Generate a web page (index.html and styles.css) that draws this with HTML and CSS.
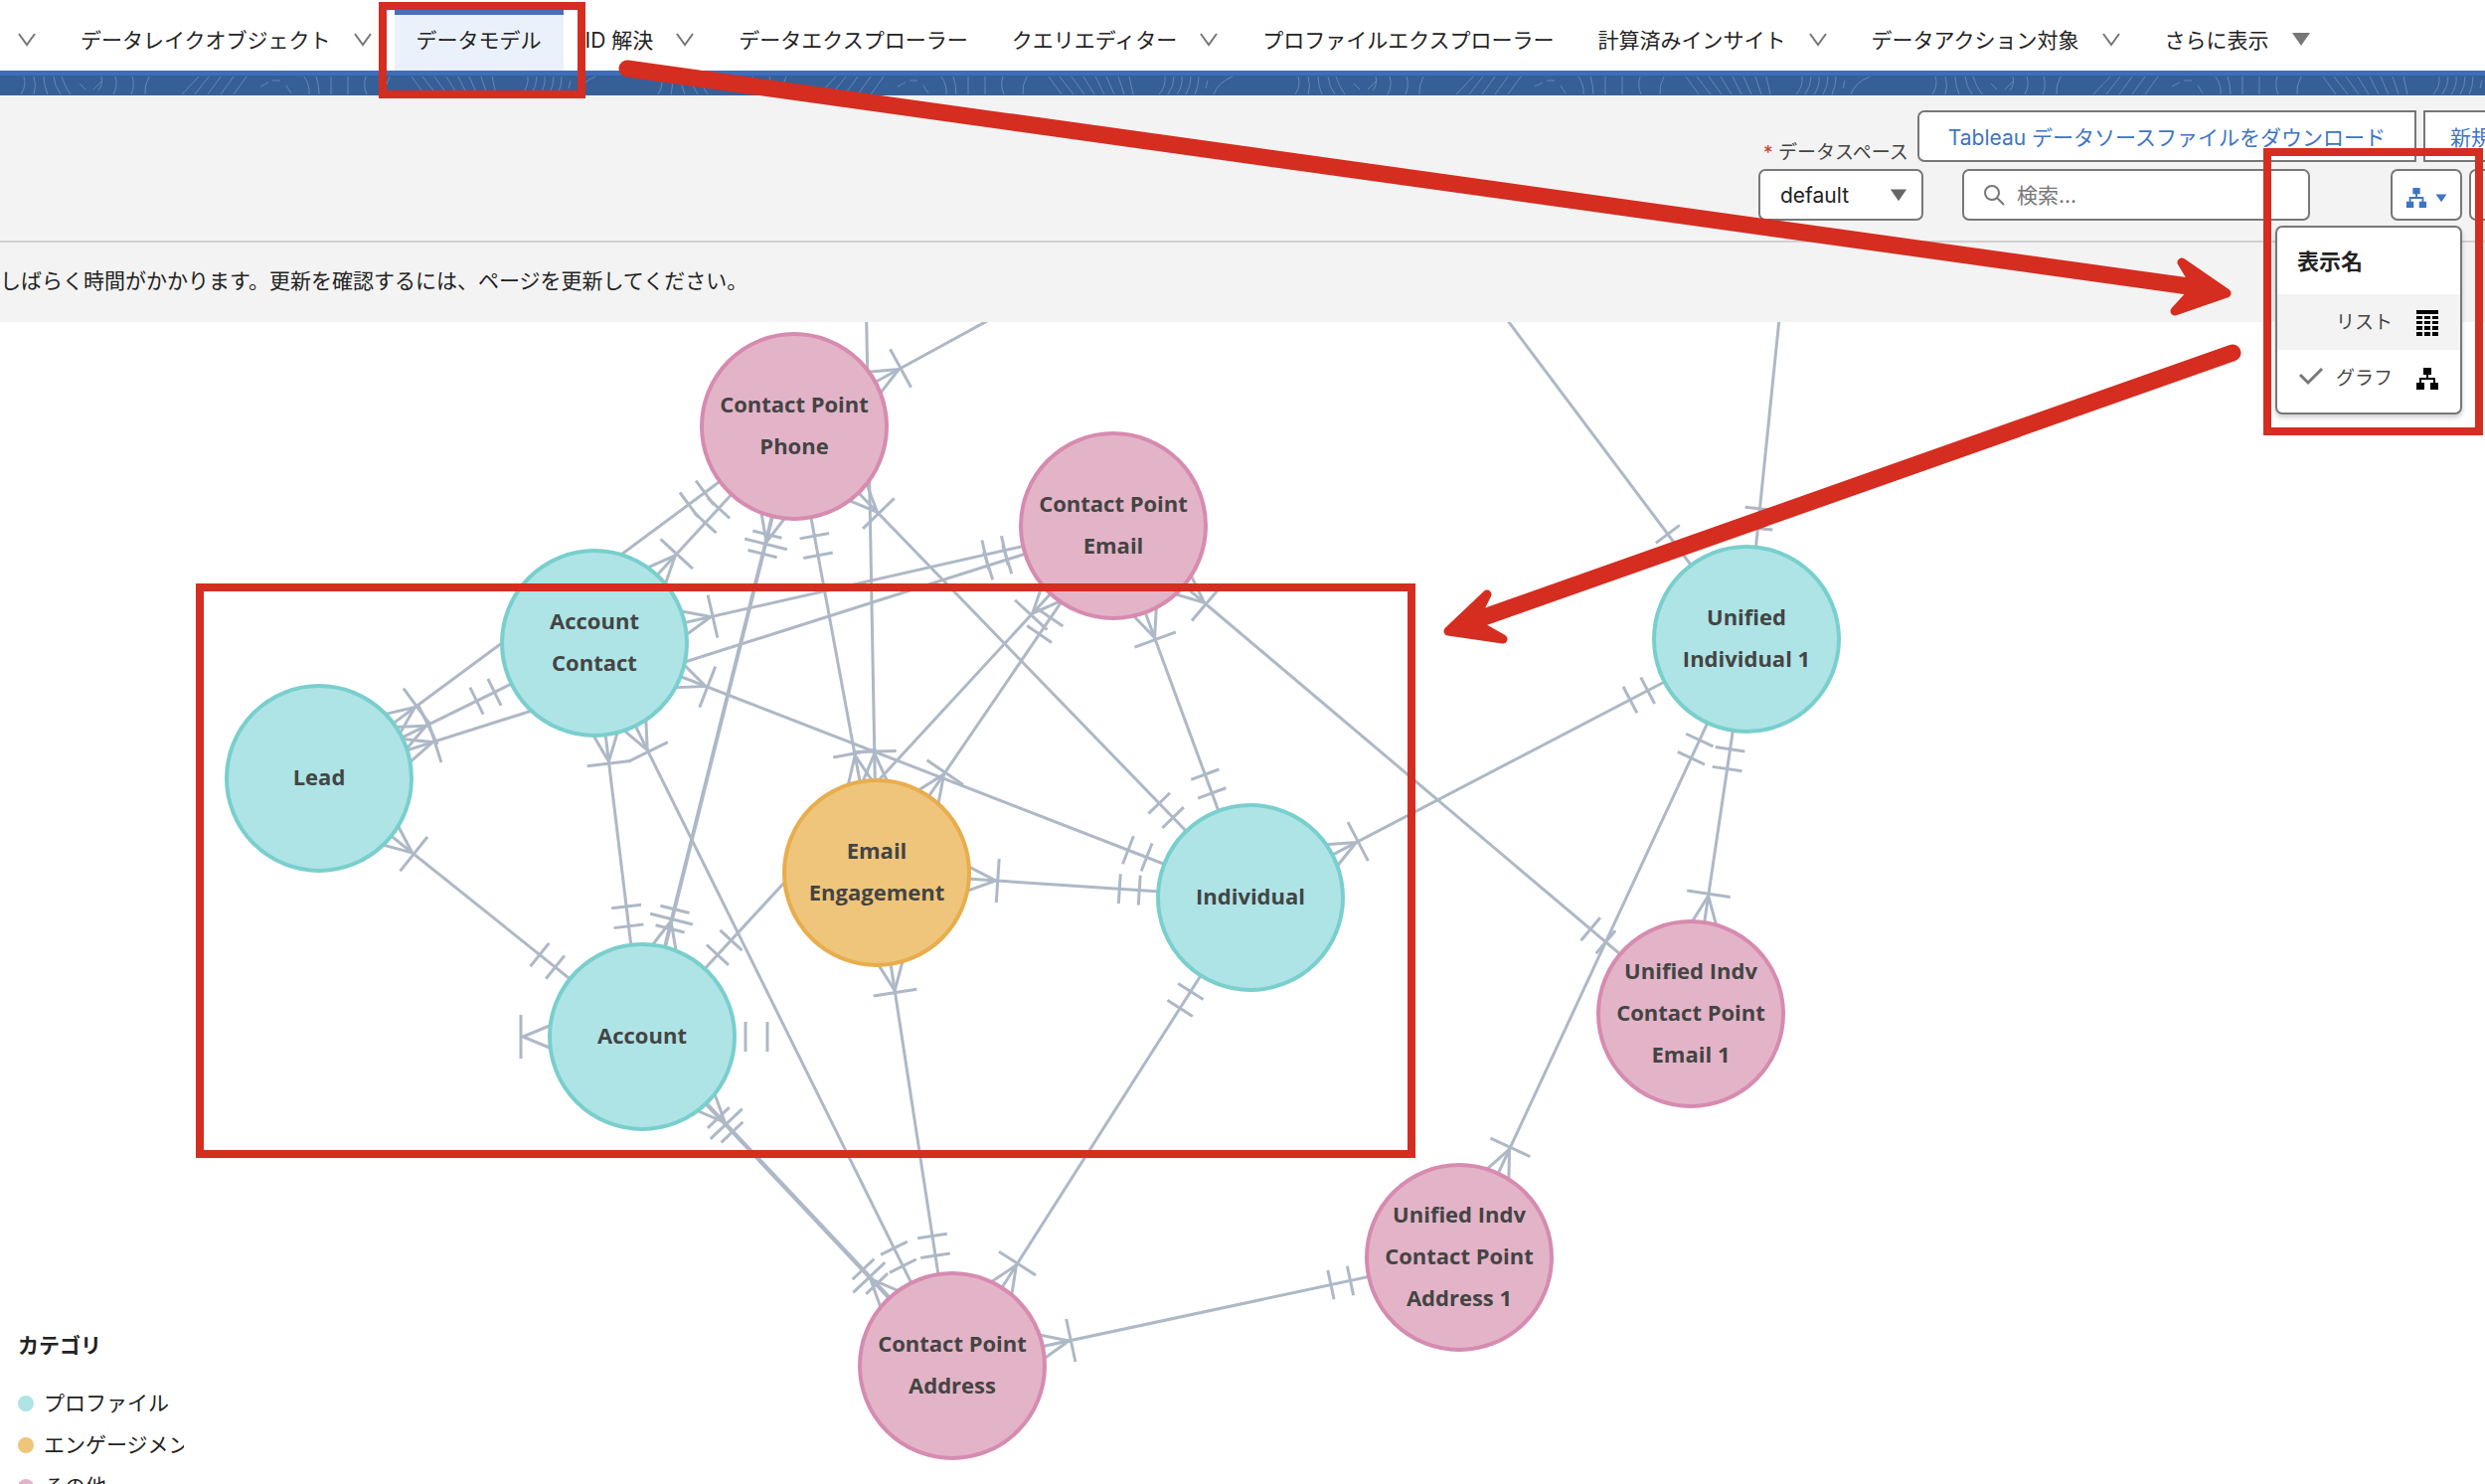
FILE: index.html
```
<!DOCTYPE html>
<html lang="ja">
  <head>
    <meta charset="utf-8" />
    <title>データモデル</title>
    <link rel="stylesheet" href="styles.css">
  </head>
  <body>
    <svg class="defs" aria-hidden="true">
      <symbol id="chevron" viewBox="0 0 20 20">
        <path d="M2 5l8 11 8-11" fill="none" stroke="currentColor" stroke-width="2" />
      </symbol>
      <symbol id="caret" viewBox="0 0 20 20">
        <path d="M1 4h18l-9 13z" fill="currentColor" />
      </symbol>
      <symbol id="tree" viewBox="0 0 24 24">
        <path d="M8 1h8v7h-8zM1 16h8v7H1zM15 16h8v7h-8z" fill="currentColor" />
        <path d="M12 7v5M5 17v-5h14v5" fill="none" stroke="currentColor" stroke-width="2" />
      </symbol>
      <symbol id="table" viewBox="0 0 24 28">
        <path
          d="M1 1h22v4H1zM1 7h6v3H1zM9 7h6v3H9zM17 7h6v3h-6zM1 12h6v3H1zM9 12h6v3H9zM17 12h6v3h-6zM1 17h6v4H1zM9 17h6v4H9zM17 17h6v4h-6zM1 23h6v4H1zM9 23h6v4H9zM17 23h6v4h-6z"
          fill="currentColor" />
      </symbol>
    </svg>

    <nav class="tabs">
      <button class="tab" aria-label="メニュー"><svg><use href="#chevron" /></svg></button>
      <button class="tab">データレイクオブジェクト<svg><use href="#chevron" /></svg></button>
      <a class="tab active" href="#model">データモデル</a>
      <button class="tab">ID 解決<svg><use href="#chevron" /></svg></button>
      <a class="tab" href="#explorer">データエクスプローラー</a>
      <button class="tab">クエリエディター<svg><use href="#chevron" /></svg></button>
      <a class="tab" href="#profile">プロファイルエクスプローラー</a>
      <button class="tab">計算済みインサイト<svg><use href="#chevron" /></svg></button>
      <button class="tab">データアクション対象<svg><use href="#chevron" /></svg></button>
      <button class="tab">さらに表示<svg><use href="#caret" /></svg></button>
    </nav>

    <svg class="banner" aria-hidden="true">
      <pattern id="waves" width="641" height="20" patternUnits="userSpaceOnUse">
        <path
          d="M24 1q3 9-3 18M34 1q3 9 0 18M44 1q0 9 4 18M54 1q1 10 7 18M62 1q3 10 9 18M80 8l6 6M94 14l8-8M102 1q2 8-3 14M116 1q3 9-2 18M133 1q3 9-1 18M150 1q-5 9-4 18M183 19l17-18M196 19l14-18M209 19l13-18M222 19l13-18M235 19l13-18M262 11l8-4M274 5h8M288 10l5 8M306 1q6 9 5 18M318 1q3 9 3 18M333 1v18M350 1v18M368 1q-3 9 1 18M392 1q-5 9-4 18M414 1l13 18M425 1l14 18M437 1l13 18M449 1l11 18M461 1l9 18M472 1l8 18M484 1l6 18M495 1l4 18M525 19q7-8 6-18M534 19q6-8 6-18M543 19q6-8 5-18M552 19q5-8 5-18M561 19q4-8 4-18M572 13l2-8M580 19q4-12 19-18" />
      </pattern>
      <rect width="100%" height="20" fill="url(#waves)" />
    </svg>

    <header class="page-header">
      <div class="toolbar">
        <div class="row">
          <label for="space"><span class="required">*</span> データスペース</label>
          <button class="btn download">Tableau データソースファイルをダウンロード</button>
          <button class="btn create">新規</button>
        </div>
        <div class="row">
          <div class="select">
            <select id="space">
              <option>default</option>
            </select>
            <svg><use href="#caret" /></svg>
          </div>
          <div class="search">
            <svg viewBox="0 0 22 22">
              <circle cx="9" cy="9" r="7" />
              <path d="M14 14l7 7" />
            </svg>
            <input type="search" placeholder="検索..." aria-label="検索" />
          </div>
          <div class="view">
            <button class="btn view-btn" aria-label="表示名">
              <svg class="icon"><use href="#tree" /></svg>
              <svg class="arrow"><use href="#caret" /></svg>
            </button>
            <div class="menu">
              <h2>表示名</h2>
              <button class="hover">リスト<svg class="icon tall"><use href="#table" /></svg></button>
              <button>
                <svg class="check" viewBox="0 0 26 20"><path d="M2 9l8 8L24 3" /></svg>
                グラフ<svg class="icon"><use href="#tree" /></svg>
              </button>
            </div>
          </div>
          <button class="btn more" aria-label="設定"></button>
        </div>
      </div>
    </header>
    <p class="notice">しばらく時間がかかります。更新を確認するには、ページを更新してください。</p>

    <main class="graph">
      <svg class="diagram">
        <!-- "one" and "many" line ends, placed just outside the node circle -->
        <marker id="one" markerUnits="userSpaceOnUse" markerWidth="320" markerHeight="60" refX="0" refY="0" orient="auto-start-reverse" overflow="visible">
          <path class="end" d="M-112-15v30M-132-15v30" />
        </marker>
        <marker id="many" markerUnits="userSpaceOnUse" markerWidth="320" markerHeight="60" refX="0" refY="0" orient="auto-start-reverse" overflow="visible">
          <path class="end" d="M-122-22v44M-88-14L-120 0-88 14" />
        </marker>

        <g class="edges">
          <path class="om" d="M799 105L598 323" />
          <path class="om" d="M799 105L321 459" />
          <path class="om" d="M598 323L321 459" />
          <path class="om" d="M646 719L321 459" />
          <path class="om" d="M1120 205L598 323" />
          <path class="om" d="M1120 205L321 459" />
          <path class="om" d="M1258 579L598 323" />
          <path class="om" d="M646 719L598 323" />
          <path class="om" d="M958 1050L598 323" />
          <path class="om" d="M799 105L646 719" />
          <path class="om" d="M647 719L800 105" />
          <path class="om" d="M799 105L882 554" />
          <path class="om" d="M871-40L882 554" />
          <path class="om" d="M1258 579L799 105" />
          <path class="om" d="M1218-124L799 105" />
          <path class="om" d="M1120 205L882 554" />
          <path class="om" d="M646 719L1120 205" />
          <path class="om" d="M1258 579L1120 205" />
          <path class="om" d="M1701 696L1120 205" />
          <path class="om" d="M1258 579L882 554" />
          <path class="om" d="M958 1050L882 554" />
          <path class="om" d="M1258 579L958 1050" />
          <path class="om" d="M1757 319L1258 579" />
          <path class="om" d="M1757 319L1701 696" />
          <path class="om" d="M1757 319L1468 941" />
          <path class="om" d="M1468 941L958 1050" />
          <path class="om" d="M646 719L958 1050" />
          <path class="om" d="M959 1049L647 718" />
          <path class="om" d="M1757 319L1368-200" />
          <path class="om" d="M1757 319L1804-140" />
          <!-- Account relates to itself -->
          <path d="M750 704v30M772 704v30M524 697v44M560 705L526 719 560 733" />
        </g>

        <g class="node other" transform="translate(799 105)">
          <circle r="93" />
          <text y="-14">Contact Point</text>
          <text y="28">Phone</text>
        </g>
        <g class="node other" transform="translate(1120 205)">
          <circle r="93" />
          <text y="-14">Contact Point</text>
          <text y="28">Email</text>
        </g>
        <g class="node profile" transform="translate(598 323)">
          <circle r="93" />
          <text y="-14">Account</text>
          <text y="28">Contact</text>
        </g>
        <g class="node profile" transform="translate(321 459)">
          <circle r="93" />
          <text y="7">Lead</text>
        </g>
        <g class="node engagement" transform="translate(882 554)">
          <circle r="93" />
          <text y="-14">Email</text>
          <text y="28">Engagement</text>
        </g>
        <g class="node profile" transform="translate(646 719)">
          <circle r="93" />
          <text y="7">Account</text>
        </g>
        <g class="node profile" transform="translate(1258 579)">
          <circle r="93" />
          <text y="7">Individual</text>
        </g>
        <g class="node profile" transform="translate(1757 319)">
          <circle r="93" />
          <text y="-14">Unified</text>
          <text y="28">Individual 1</text>
        </g>
        <g class="node other" transform="translate(1701 696)">
          <circle r="93" />
          <text y="-35">Unified Indv</text>
          <text y="7">Contact Point</text>
          <text y="49">Email 1</text>
        </g>
        <g class="node other" transform="translate(1468 941)">
          <circle r="93" />
          <text y="-35">Unified Indv</text>
          <text y="7">Contact Point</text>
          <text y="49">Address 1</text>
        </g>
        <g class="node other" transform="translate(958 1050)">
          <circle r="93" />
          <text y="-14">Contact Point</text>
          <text y="28">Address</text>
        </g>
      </svg>

      <aside class="legend">
        <h2>カテゴリ</h2>
        <ul>
          <li class="profile">プロファイル</li>
          <li class="engagement">エンゲージメント</li>
          <li class="other">その他</li>
        </ul>
      </aside>
    </main>

    <svg class="notes" aria-hidden="true">
      <rect x="385" y="6" width="200" height="89" />
      <rect x="201" y="591" width="1219" height="570" />
      <rect x="2281" y="153" width="213" height="281" />
      <path class="shaft" d="M631 69L2216 290M2246 355L1476 627" />
      <path class="head" d="M2240 295L2195 264 2210 289 2188 313zM1457 635L1496 598 1482 626 1512 643z" />
    </svg>
  </body>
</html>
```
FILE: styles.css
```
*,
*::after,
*::before {
  margin: 0;
  padding: 0;
  box-sizing: border-box;
}

body {
  position: relative;
  display: flex;
  flex-direction: column;
  height: 100vh;
  overflow: hidden;
  background-color: #fff;
  color: #222;
  font-family: Inter, "Noto Sans CJK JP", sans-serif;
  font-size: 21px;
}

button,
input,
select {
  font: inherit;
  color: inherit;
}

.defs {
  position: absolute;
  width: 0;
  height: 0;
}

.tabs {
  display: flex;
  height: 71px;
  padding-top: 10px;
}

.tab {
  display: flex;
  align-items: center;
  flex: none;
  gap: 22px;
  padding: 0 22px 4px;
  border: none;
  background: none;
  color: #222;
  text-decoration: none;
  white-space: nowrap;
}

.tab:first-child {
  padding-left: 17px;
}

.tab svg {
  width: 20px;
  height: 20px;
  color: #777;
}

.tab.active {
  border-top: 5px solid #4a6fb8;
  padding-bottom: 9px;
  background-color: #ebf1fa;
}

.banner {
  display: block;
  flex: none;
  width: 100%;
  height: 25px;
  border-top: 5px solid #3e6dbb;
  background-color: #365f98;
}

.banner path {
  fill: none;
  stroke: #6387b5;
  stroke-width: 1;
}

.page-header {
  flex: none;
  padding: 15px 0 20px;
  border-bottom: 2px solid #d0d0d0;
  background-color: #f3f3f3;
}

.toolbar {
  display: flex;
  flex-direction: column;
  gap: 7px;
  margin-right: -56px;
}

.row {
  display: flex;
  justify-content: flex-end;
  gap: 7px;
}

.row label {
  align-self: flex-end;
  margin-right: 2px;
  font-size: 19px;
  line-height: 19px;
  color: #444;
}

.required {
  color: #c23934;
}

.btn {
  height: 52px;
  border: 2px solid #777;
  border-radius: 7px;
  background-color: #fff;
  color: #3e74c4;
  white-space: nowrap;
}

.download {
  padding: 0 29px;
  border-radius: 7px 0 0 7px;
}

.create {
  width: 118px;
  padding: 0 25px;
  border-radius: 0;
  text-align: left;
}

.select {
  position: relative;
  width: 166px;
  margin-right: 32px;
}

.select select {
  width: 100%;
  height: 52px;
  padding-left: 20px;
  border: 2px solid #777;
  border-radius: 7px;
  background-color: #fff;
  appearance: none;
}

.select svg {
  position: absolute;
  top: 17px;
  right: 16px;
  width: 18px;
  height: 18px;
  color: #666;
}

.search {
  display: flex;
  align-items: center;
  gap: 12px;
  width: 350px;
  height: 52px;
  margin-right: 74px;
  padding: 0 19px;
  border: 2px solid #777;
  border-radius: 7px;
  background-color: #fff;
}

.search svg {
  flex: none;
  width: 22px;
  height: 22px;
  fill: none;
  stroke: #777;
  stroke-width: 2;
}

.search input {
  flex: 1;
  min-width: 0;
  border: none;
  outline: none;
  background: none;
}

.search input::placeholder {
  color: #777;
}

.view {
  position: relative;
}

.icon {
  width: 24px;
  height: 24px;
}

.icon.tall {
  height: 28px;
}

.view-btn {
  display: flex;
  align-items: center;
  justify-content: center;
  gap: 8px;
  width: 72px;
  padding-top: 6px;
}

.view-btn .icon {
  width: 22px;
  height: 22px;
}

.arrow {
  width: 12px;
  height: 12px;
}

.more {
  width: 72px;
}

.menu {
  position: absolute;
  z-index: 1;
  top: 57px;
  right: 0;
  width: 188px;
  padding: 13px 0 7px;
  border: 2px solid #777;
  border-radius: 7px;
  background-color: #fff;
  box-shadow: 0 3px 5px #0003;
}

.menu h2 {
  padding: 0 20px 12px;
  font-size: 22px;
  line-height: 42px;
}

.menu button {
  display: flex;
  align-items: center;
  justify-content: flex-end;
  width: 100%;
  height: 56px;
  padding: 0 21px 4px;
  border: none;
  background: none;
  font-size: 19px;
  color: #444;
}

.menu .hover {
  background-color: #f3f3f3;
}

.menu .icon {
  margin: 5px 0 0 23px;
  color: #000;
}

.check {
  width: 26px;
  height: 20px;
  margin-right: auto;
  fill: none;
  stroke: #777;
  stroke-width: 3;
}

.notice {
  flex: none;
  height: 80px;
  background-color: #f3f3f3;
  line-height: 78px;
  white-space: nowrap;
}

.graph {
  position: relative;
  flex: 1;
  min-height: 0;
}

.diagram {
  display: block;
  width: 100%;
  height: 100%;
}

.edges path,
.end {
  fill: none;
  stroke: #aeb8c6;
  stroke-width: 3;
}

.om {
  marker-start: url(#one);
  marker-end: url(#many);
}

.node circle {
  stroke-width: 4;
}

.node text {
  fill: #444;
  font-family: "Open Sans", sans-serif;
  font-size: 22px;
  font-weight: 700;
  text-anchor: middle;
}

.profile circle {
  fill: #aee4e5;
  stroke: #79cfcd;
}

.engagement circle {
  fill: #eec57b;
  stroke: #e8ad4c;
}

.other circle {
  fill: #e3b4c7;
  stroke: #d68bb0;
}

.legend {
  position: absolute;
  left: 18px;
  bottom: -24px;
  width: 167px;
  line-height: 42px;
}

.legend h2 {
  margin-bottom: 16px;
  font-size: 21px;
}

.legend ul {
  list-style: none;
}

.legend li {
  display: flex;
  align-items: center;
  gap: 10px;
  overflow: hidden;
  white-space: nowrap;
}

.legend li::before {
  content: '';
  flex: none;
  width: 16px;
  height: 16px;
  border-radius: 50%;
}

.legend .profile::before {
  background-color: #aee4e5;
}

.legend .engagement::before {
  background-color: #eec57b;
}

.legend .other::before {
  background-color: #e3b4c7;
}

/* red call-outs drawn over the whole page */
.notes {
  position: absolute;
  z-index: 2;
  top: 0;
  left: 0;
  width: 100%;
  height: 100%;
  pointer-events: none;
  stroke: #d52d20;
}

.notes rect {
  fill: none;
  stroke-width: 8;
}

.shaft {
  stroke-width: 17;
  stroke-linecap: round;
}

.head {
  fill: #d52d20;
  stroke-width: 9;
  stroke-linejoin: round;
}
```
